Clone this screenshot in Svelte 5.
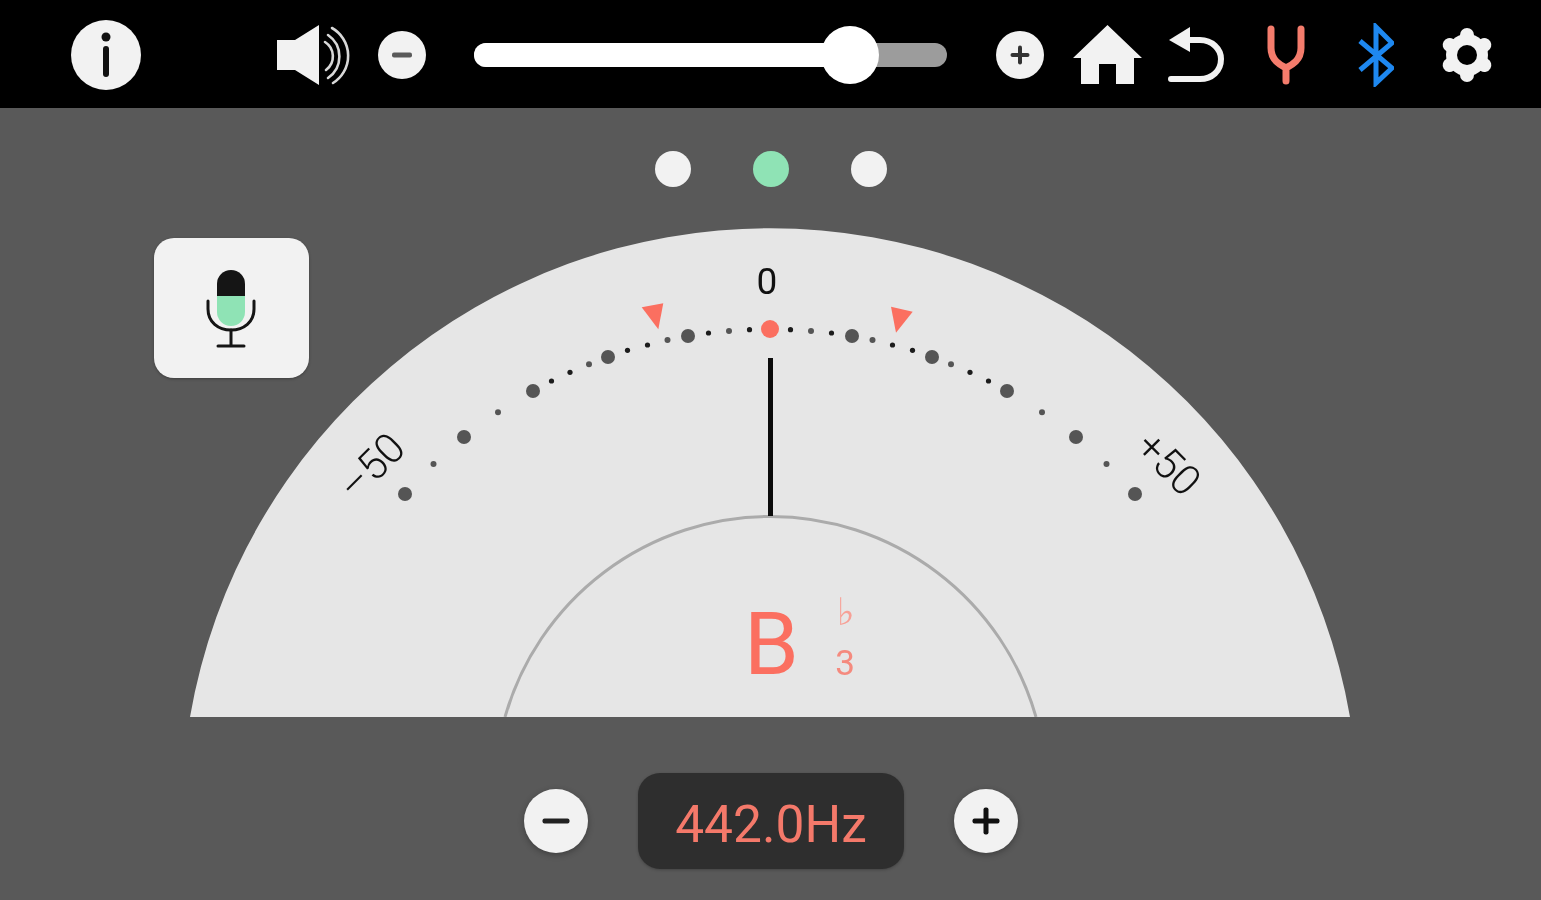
<script>
    // dial marks, in page coordinates (mirrored around x = 770)
    const CX = 770;
    const big = [[82, 336], [162, 357], [237, 391], [306, 437], [365, 494]];
    const small = [
        [20.5, 329.7, 0], [41, 331, 1], [61.5, 333, 0], [102.5, 340, 1], [122.5, 345, 0], [142.5, 350.3, 0],
        [181, 364.3, 1], [200, 372.3, 0], [218.5, 381, 0], [272, 412.3, 1], [336.5, 464, 1]
    ];
    const teeth = [0, 60, 120];
    let volume = 0.795;
</script>

<div class="tuner">
    <header class="topbar">
        <svg class="info" viewBox="0 0 70 70" aria-label="info">
            <circle cx="35" cy="35" r="35" fill="#f2f2f2" />
            <circle cx="35" cy="17" r="4.5" fill="#111" />
            <rect x="32" y="26" width="6" height="31" rx="3" fill="#111" />
        </svg>

        <svg class="speaker" viewBox="277 25 73 60" aria-label="sound">
            <path d="M277 40 H295 L319 25 V85 L295 70 H277 Z" fill="#f2f2f2" />
            <g fill="none" stroke="#d8d8d8" stroke-width="2.6" stroke-linecap="round">
                <path d="M325 42 A17 17 0 0 1 326 70" />
                <path d="M328 35 A26 26 0 0 1 328 78" />
                <path d="M332 28 A32 32 0 0 1 333 83" />
            </g>
        </svg>

        <button class="round small vol-minus" aria-label="volume down"><span class="minus-bar"></span></button>

        <div class="slider">
            <div class="fill" style="width: {volume * 100}%"></div>
            <div class="thumb" style="left: {volume * 100}%"></div>
        </div>

        <button class="round small vol-plus" aria-label="volume up"><span class="plus-h"></span><span class="plus-v"></span></button>

        <svg class="home" viewBox="1073 25 69 60" aria-label="home">
            <path d="M1107.5 25 L1142 58 H1134 V84 H1116 V64 H1099 V84 H1081 V58 H1073 Z" fill="#f2f2f2" />
        </svg>

        <svg class="back" viewBox="1168 28 56 56" aria-label="back">
            <path d="M1169 41 L1190 28 V53 Z" fill="#f2f2f2" />
            <path d="M1188 41 H1200 C1212 41 1221 50 1221 60 C1221 72 1212 80 1200 80 H1171" fill="none" stroke="#f2f2f2" stroke-width="6" stroke-linecap="round" />
        </svg>

        <svg class="fork" viewBox="1267 25 38 60" aria-label="tuning fork">
            <path d="M1271 29 V48 C1271 60 1280 65 1286 68 C1292 65 1301 60 1301 48 V29 M1286 68 V81" fill="none" stroke="#f47c6c" stroke-width="7" stroke-linecap="round" />
        </svg>

        <svg class="bluetooth" viewBox="1358 24 36 64" aria-label="bluetooth">
            <path d="M1360 42 L1392 69 L1376 84 V28 L1392 44 L1360 71" fill="none" stroke="#1e88f0" stroke-width="5" />
        </svg>

        <svg class="gear" viewBox="-27 -27 54 54" aria-label="settings">
            <circle r="21" fill="#f2f2f2" />
            {#each teeth as a}
                <line x1="0" y1="-20" x2="0" y2="20" stroke="#f2f2f2" stroke-width="14" stroke-linecap="round" transform="rotate({a})" />
            {/each}
            <circle r="10" fill="#000" />
        </svg>
    </header>

    <main class="body">
        <div class="lights">
            <span class="light"></span>
            <span class="light on"></span>
            <span class="light"></span>
        </div>

        <div class="stage">
            <svg class="dial" viewBox="190 228 1160 489" aria-label="tuning dial">
                <path d="M190 717 A588.5 588.5 0 0 1 1350 717 Z" fill="#e6e6e6" />
                <path d="M505 717 A276 276 0 0 1 1036 717" fill="none" stroke="#ababab" stroke-width="3" />

                <text class="scale" x="767" y="294" text-anchor="middle">0</text>
                <text class="scale wide" x="371" y="481" text-anchor="middle" transform="rotate(-45 371 466)">–50</text>
                <text class="scale wide" x="1169" y="478" text-anchor="middle" transform="rotate(45 1169 463)">+50</text>

                {#each big as [dx, y]}
                    <circle cx={CX - dx} cy={y} r="7" fill="#555" />
                    <circle cx={CX + dx} cy={y} r="7" fill="#555" />
                {/each}
                {#each small as [dx, y, grey]}
                    <circle cx={CX - dx} cy={y} r={grey ? 3 : 2.6} fill={grey ? '#555' : '#1c1c1c'} />
                    <circle cx={CX + dx} cy={y} r={grey ? 3 : 2.6} fill={grey ? '#555' : '#1c1c1c'} />
                {/each}

                <circle cx="770" cy="329" r="9" fill="#fb6f60" />
                <polygon points="641.7,307.3 663.3,303.3 658.3,329.3" fill="#fb6f60" />
                <polygon points="891,306.7 912.7,311.7 896,332.7" fill="#fb6f60" />

                <rect x="768" y="358" width="5" height="158" fill="#0c0c0c" />

                <text class="note" x="744" y="674">B</text>
                <text class="flat" x="846" y="625" text-anchor="middle">♭</text>
                <text class="octave" x="845" y="675" text-anchor="middle">3</text>
            </svg>

            <button class="mic" aria-label="microphone">
                <svg viewBox="0 0 56 84" width="56" height="84">
                    <path d="M5 32 V40 C5 53 15 61 28 61 C41 61 51 53 51 40 V32" fill="none" stroke="#151515" stroke-width="3" stroke-linecap="round" />
                    <path d="M28 61 V77 M15 77 H41" fill="none" stroke="#151515" stroke-width="3" stroke-linecap="round" />
                    <path d="M14 27 V15 A14 14 0 0 1 42 15 V27 Z" fill="#151515" />
                    <path d="M14 27 H42 V43 A14 14 0 0 1 14 43 Z" fill="#8fe3b5" />
                </svg>
            </button>
        </div>

        <div class="pitch">
            <button class="round large" aria-label="lower pitch"><span class="minus-bar"></span></button>
            <div class="readout">442.0Hz</div>
            <button class="round large" aria-label="raise pitch"><span class="plus-h"></span><span class="plus-v"></span></button>
        </div>
    </main>
</div>

<style>
    :global(body) {
        margin: 0;
        background: #595959;
    }

    .tuner {
        width: 1541px;
        height: 900px;
        overflow: hidden;
        display: flex;
        flex-direction: column;
        font-family: Roboto, "Liberation Sans", sans-serif;
        filter: blur(0.5px);
    }

    .topbar {
        height: 108px;
        box-sizing: border-box;
        flex: none;
        background: #000;
        display: flex;
        align-items: center;
        padding: 2px 0 0 71px;
    }

    .topbar svg {
        flex: none;
        display: block;
    }

    .info { width: 70px; height: 70px; }
    .speaker { width: 73px; height: 60px; margin-left: 136px; }
    .vol-minus { margin-left: 28px; }
    .vol-plus { margin-left: 49px; }
    .home { width: 69px; height: 60px; margin-left: 29px; }
    .back { width: 56px; height: 56px; margin-left: 26px; }
    .fork { width: 38px; height: 60px; margin-left: 43px; }
    .bluetooth { width: 36px; height: 64px; margin-left: 53px; }
    .gear { width: 54px; height: 54px; margin-left: 46px; }

    .round {
        flex: none;
        padding: 0;
        border: none;
        border-radius: 50%;
        background: #f2f2f2;
        position: relative;
        display: block;
    }

    .round.small { width: 48px; height: 48px; }
    .round.large {
        width: 64px;
        height: 64px;
        box-shadow: 0 2px 6px rgba(0, 0, 0, 0.3);
    }

    .minus-bar, .plus-h, .plus-v {
        position: absolute;
        left: 50%;
        top: 50%;
        transform: translate(-50%, -50%);
        border-radius: 2px;
    }

    .small .minus-bar { width: 20px; height: 5px; background: #5a5a5a; }
    .small .plus-h { width: 19px; height: 4px; background: #333; }
    .small .plus-v { width: 4px; height: 19px; background: #333; }
    .large .minus-bar { width: 27px; height: 5px; background: #222; }
    .large .plus-h { width: 27px; height: 5px; background: #111; }
    .large .plus-v { width: 5px; height: 27px; background: #111; }

    .slider {
        flex: none;
        width: 473px;
        height: 24px;
        margin-left: 48px;
        border-radius: 12px;
        background: #9c9c9c;
        position: relative;
    }

    .fill {
        height: 100%;
        border-radius: 12px;
        background: #fff;
    }

    .thumb {
        position: absolute;
        top: 50%;
        width: 58px;
        height: 58px;
        border-radius: 50%;
        background: #fff;
        transform: translate(-50%, -50%);
    }

    .body {
        flex: 1;
        background: #595959;
        display: flex;
        flex-direction: column;
    }

    .lights {
        display: flex;
        justify-content: center;
        gap: 62px;
        margin-top: 43px;
        padding-left: 1px;
    }

    .light {
        width: 36px;
        height: 36px;
        border-radius: 50%;
        background: #f2f2f2;
    }

    .light.on {
        background: #8fe3b5;
    }

    .stage {
        display: grid;
        margin-top: 41px;
    }

    .dial, .mic {
        grid-area: 1 / 1;
        justify-self: start;
        align-self: start;
    }

    .dial {
        display: block;
        width: 1160px;
        height: 489px;
        margin-left: 190px;
    }

    .scale {
        font-size: 37px;
        fill: #111;
    }

    .scale.wide {
        font-size: 42px;
        font-weight: 300;
    }

    .note {
        font-size: 88px;
        fill: #fb6f60;
    }

    .flat {
        font-family: "DejaVu Sans", sans-serif;
        font-size: 38px;
        fill: #f7a096;
    }

    .octave {
        font-size: 35px;
        fill: #f58a7e;
    }

    .mic {
        width: 155px;
        height: 140px;
        margin: 10px 0 0 154px;
        padding: 6px 2px 0 0;
        border: none;
        border-radius: 20px;
        background: #f2f2f2;
        box-shadow: 0 1px 3px rgba(0, 0, 0, 0.3);
        display: flex;
        align-items: center;
        justify-content: center;
        position: relative;
    }

    .pitch {
        display: flex;
        align-items: center;
        margin-top: 56px;
        padding-left: 524px;
    }

    .readout {
        width: 266px;
        height: 96px;
        margin: 0 50px 0 50px;
        border-radius: 22px;
        background: #2e2e2e;
        color: #f4796a;
        font-size: 51.5px;
        line-height: 103px;
        text-align: center;
        box-shadow: 0 1px 3px rgba(0, 0, 0, 0.25);
    }
</style>
